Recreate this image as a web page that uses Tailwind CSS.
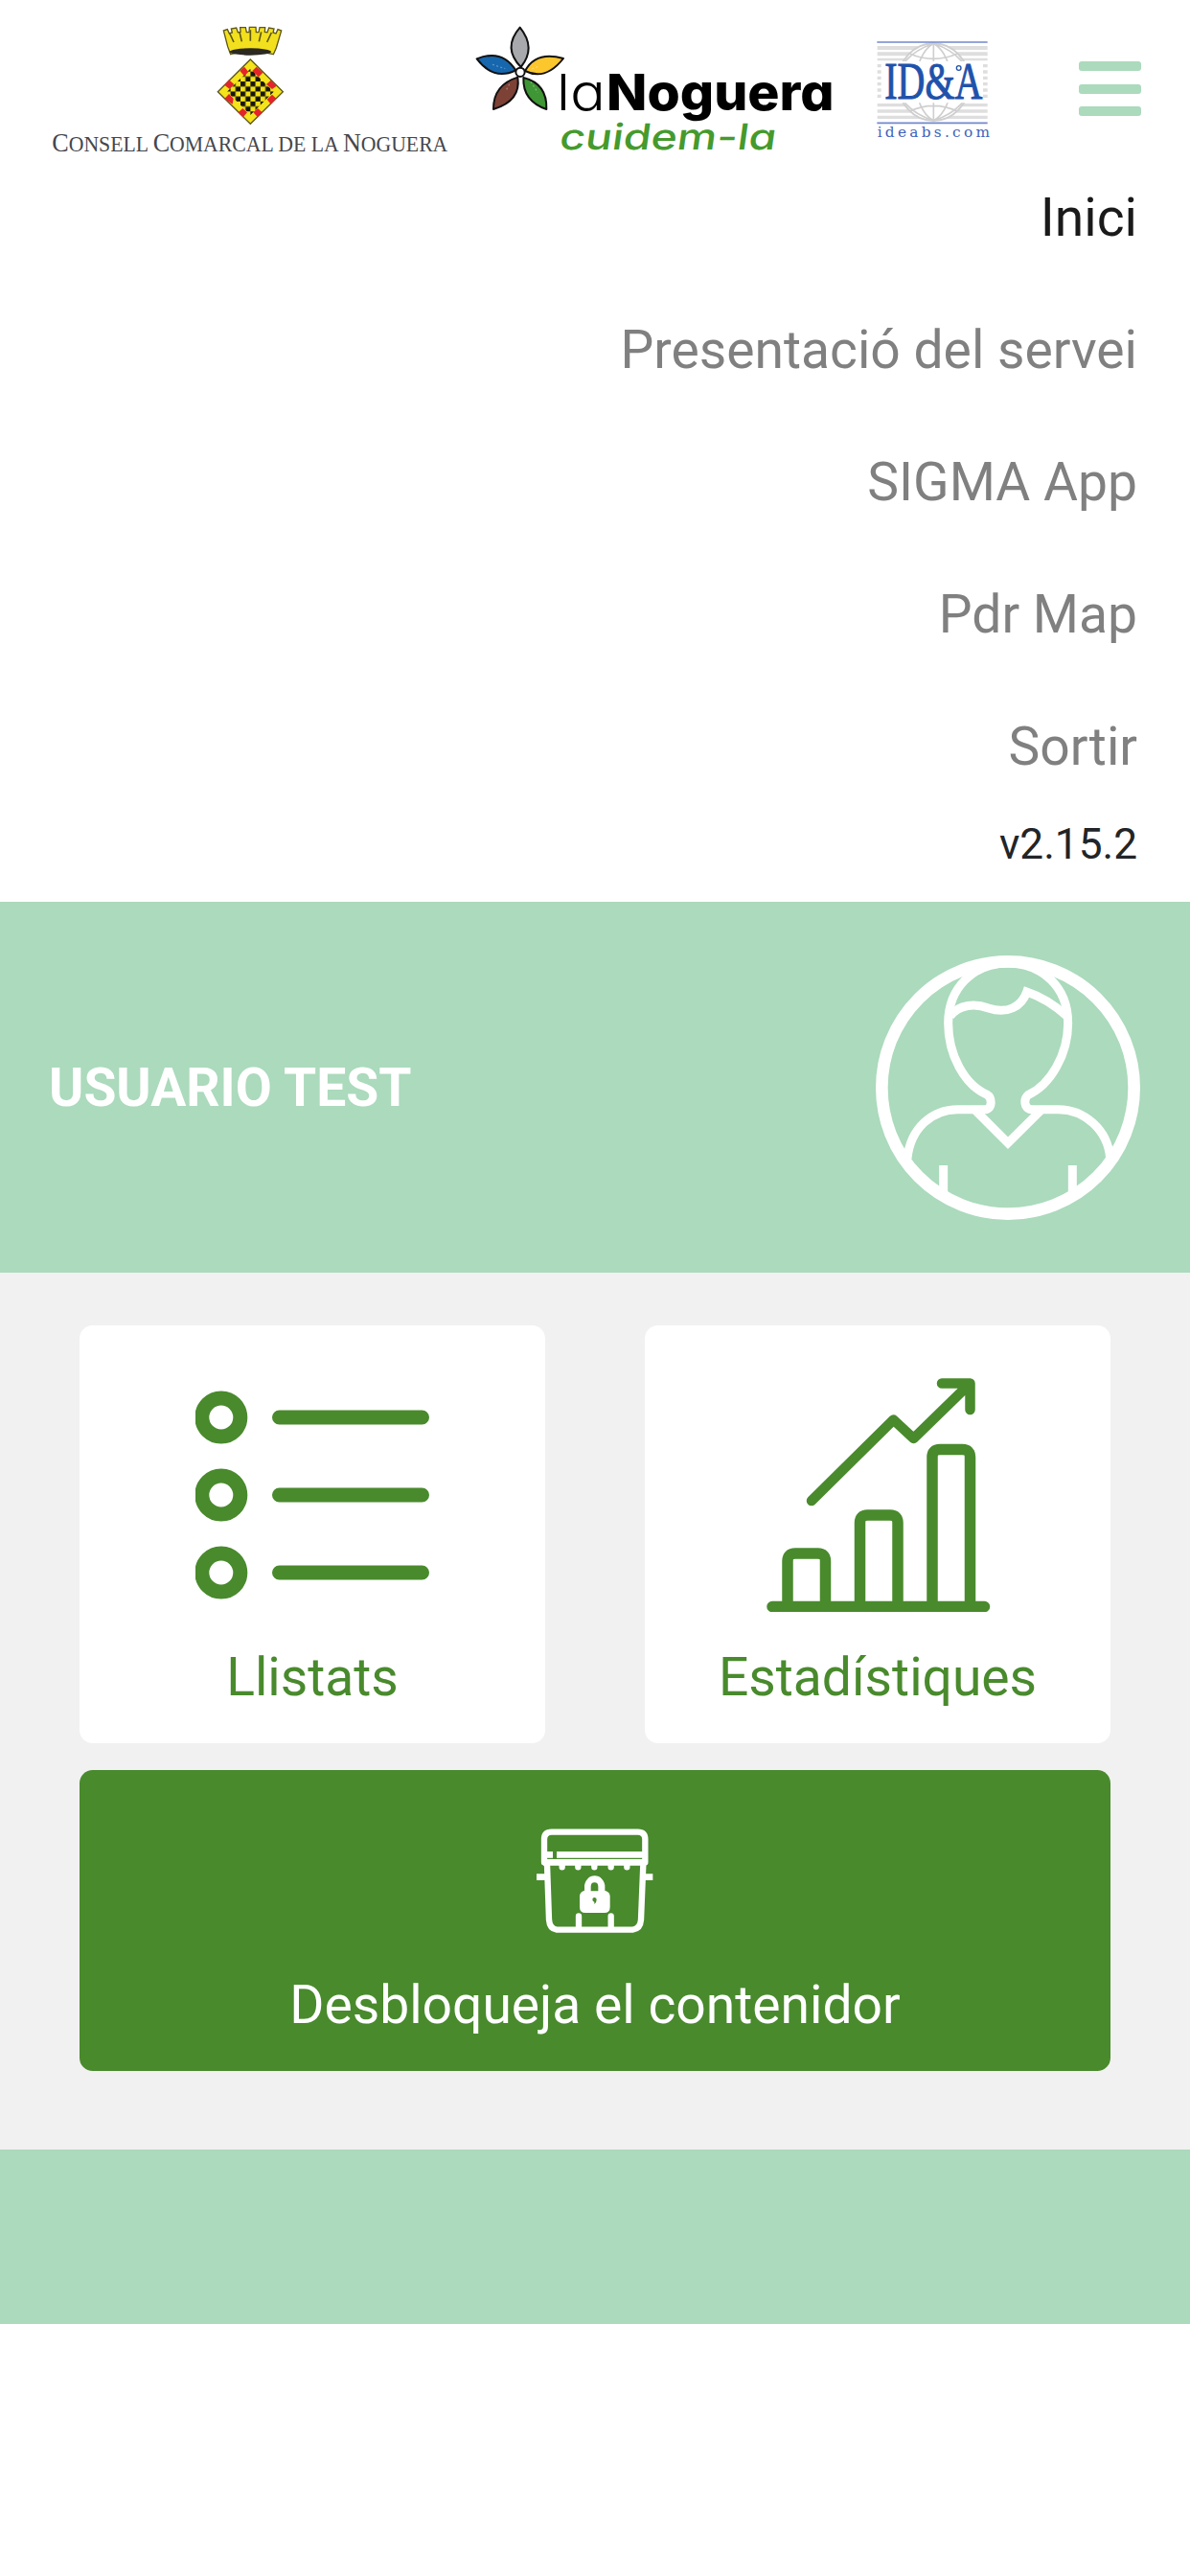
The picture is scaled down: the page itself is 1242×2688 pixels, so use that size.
<!DOCTYPE html>
<html lang="ca">
<head>
<meta charset="utf-8">
<title>La Noguera</title>
<script src="https://cdn.jsdelivr.net/npm/@tailwindcss/browser@4"></script>
</head>
<body class="min-h-screen bg-white font-['Roboto',sans-serif] text-[55.2px] leading-[82.8px] text-[#212529]">
<header class="flex h-[158px] pl-[40px]">
  <!-- Consell Comarcal -->
  <svg class="h-[158px] w-[440px] shrink-0 overflow-visible" viewBox="0 -30 1320 474">
    <defs>
      <pattern id="chess" width="31.2" height="31.2" patternUnits="userSpaceOnUse" x="633" y="194">
        <rect width="31.2" height="31.2" fill="#f3e21a"/><rect width="15.6" height="15.6" fill="#17150a"/><rect x="15.6" y="15.6" width="15.6" height="15.6" fill="#17150a"/>
      </pattern>
    </defs>
    <path d="M580 66l12-4 6 13 9-3-3-12 16-3 5 14 8-1-1-14h17l3 15h8l1-16h20l1 16h8l3-15h17l-1 14 8 1 5-14 16 3-3 12 9 3 6-13 11 4-16 54-9 20q-71-18-134 0l-9-24z" fill="#f2e01e" stroke="#5e5718" stroke-width="4"/>
    <path d="M598 72l14 30M630 70l7 30M664 64v34M698 70l-7 30M730 72l-14 30" fill="none" stroke="#5e5718" stroke-width="5"/>
    <ellipse cx="664" cy="132" rx="65" ry="11" fill="#2c2920"/>
    <path d="M664 156L766 257 664 358 562 257z" fill="#f5e31b" stroke="#5b5620" stroke-width="4"/>
    <path d="M664 185L737 257 664 330 591 257z" fill="url(#chess)"/>
    <path d="M631 192l14-13 13 16-13 13zM670 192l13-13 20 18-13 14zM583 236l14-16 16 14-14 15zM714 234l14-13 18 18-14 10zM583 279l14-15 14 15-3 17zM716 281l16-15 13 12-17 18zM626 322l14-13 14 13-13 15zM673 322l14-13 14 13-14 15z" fill="#e3242b"/>
    <text x="43" y="445" textLength="1239" lengthAdjust="spacingAndGlyphs" font-family="Liberation Serif" fill="#46464a" font-size="70"><tspan font-size="84">C</tspan>ONSELL <tspan font-size="84">C</tspan>OMARCAL DE LA <tspan font-size="84">N</tspan>OGUERA</text>
  </svg>
  <!-- laNoguera -->
  <svg class="h-[158px] w-[400px] shrink-0 overflow-visible" viewBox="0 -30 1200 474">
    <g stroke="#111" stroke-width="6" stroke-linejoin="round">
      <path d="M188 56Q240 120 191 180Q132 120 188 56z" fill="#a7a9ac"/>
      <path d="M53 154Q132 122 175 190Q106 224 53 154z" fill="#1667ad"/>
      <path d="M324 153Q268 224 204 192Q238 128 324 153z" fill="#fcc62d"/>
      <path d="M105 312Q104 236 181 212Q192 286 105 312z" fill="#7d4235"/>
      <path d="M271 312Q196 286 199 213Q274 232 271 312z" fill="#3f9634"/>
      <circle cx="189" cy="196" r="14" fill="#fff"/>
    </g>
    <path d="M102 172l40 13M226 186l24-10M146 250l12-22M222 226l22 34" stroke="#fff" stroke-opacity=".3" stroke-width="4" stroke-dasharray="6 7"/>
    <text class="[font-feature-settings:'cv11']" x="302" y="315" font-family="Inter" font-weight="300" font-size="158" textLength="154" lengthAdjust="spacingAndGlyphs" fill="#000">la</text>
    <text class="[font-feature-settings:'cv11']" x="459" y="315" font-family="Inter" font-weight="800" font-size="158" textLength="713" lengthAdjust="spacingAndGlyphs" fill="#000">Noguera</text>
    <text class="[font-feature-settings:'cv11']" transform="translate(308 438) skewX(-8)" font-family="Inter" font-weight="500" font-size="112" textLength="678" lengthAdjust="spacingAndGlyphs" fill="#459a2d">cuidem-la</text>
  </svg>
  <!-- ID&A -->
  <svg class="ml-[10px] h-[158px] w-[150px] shrink-0 overflow-visible" viewBox="0 -60 450 474">
    <g fill="#dedede"><path d="M77 84h345v12H77zM77 103h345v12H77zM77 122h345v8H77zM77 141h12v10H77zM77 160h12v10H77zM77 179h12v10H77zM77 198h12v10H77zM77 217h12v10H77zM77 236h12v10H77zM408 141h14v10h-14zM408 160h14v10h-14zM408 179h14v10h-14zM408 198h14v10h-14zM408 217h14v10h-14zM408 236h14v10h-14zM77 264h345v10H77zM77 283h345v10H77zM77 302h345v10H77z"/></g>
    <ellipse cx="253" cy="197" rx="112" ry="121" fill="#fff" stroke="#cfcfcf" stroke-width="6"/>
    <path d="M178 108q75 32 150 0M178 288q75-34 150 0M253 76v242M253 76C180 120 180 276 253 318M253 76C326 120 326 276 253 318M253 76C100 130 100 266 253 318M253 76C406 130 406 266 253 318" fill="none" stroke="#cfcfcf" stroke-width="5"/>
    <path d="M90 132h316v130H90z" fill="#fff"/>
    <path d="M76 72h346M76 325h346" stroke="#7388cd" stroke-width="5"/>
    <text x="100" y="249" font-family="Liberation Serif" font-size="162" textLength="306" lengthAdjust="spacingAndGlyphs" fill="#1f52ab" stroke="#1f52ab" stroke-width="3">ID&amp;A</text>
    <circle cx="332" cy="153" r="7" fill="none" stroke="#1f52ab" stroke-width="4"/>
    <text x="77" y="369" font-family="DejaVu Serif" font-size="46" textLength="352" fill="#4263bb">ideabs.com</text>
  </svg>
  <button class="ml-[86px] mt-[64px] flex h-[57px] w-[65px] flex-col justify-between" aria-label="Menú">
    <span class="h-[10px] w-full rounded-[3px] bg-[#abdabc]"></span><span class="h-[10px] w-full rounded-[3px] bg-[#abdabc]"></span><span class="h-[10px] w-full rounded-[3px] bg-[#abdabc]"></span>
  </button>
</header>
<nav class="flex h-[783px] flex-col items-end pr-[55px] text-[#808080]">
  <a class="py-[27.6px] text-[#1a1a1a]">Inici</a>
  <a class="py-[27.6px]">Presentació del servei</a>
  <a class="py-[27.6px]">SIGMA App</a>
  <a class="py-[27.6px]">Pdr Map</a>
  <a class="py-[27.6px]">Sortir</a>
  <span class="text-[44.2px] leading-[66px] text-[#212529]">v2.15.2</span>
</nav>
<section class="flex h-[387px] items-center justify-between bg-[#abdabc] pl-[51px] pr-[52px]">
  <h1 class="pt-[2px] font-bold text-white">USUARIO TEST</h1>
  <svg class="size-[276px]" viewBox="103 110 828 828" fill="none" stroke="#fff" stroke-width="27">
    <circle cx="517" cy="524" r="395" stroke-width="38"/>
    <path d="M202 745C212 650 280 592 360 592H448C468 590 468 556 452 546C380 515 330 420 330 322C330 210 410 134 517 134S705 210 705 322C705 420 650 515 580 547C565 560 568 592 590 592H675C755 592 830 655 837 745"/>
    <path d="M336 300C365 262 415 260 456 275C515 295 560 270 576 224Q640 245 702 300M415 595L517 697 620 595M315 767v90M719 767v90"/>
  </svg>
</section>
<main class="h-[915px] bg-[#f1f1f1] px-[83px] pt-[55px]">
  <div class="grid grid-cols-2 gap-[104px]">
    <a class="flex h-[436px] flex-col items-center rounded-[13.8px] bg-white pt-[55px] text-[#498a2d]">
      <svg class="h-[244px] w-[244px]" viewBox="205 1438 244 244" fill="none" stroke="#498a2d">
        <g stroke-width="15"><circle cx="231.8" cy="1479" r="20"/><circle cx="231.8" cy="1560" r="20"/><circle cx="231.8" cy="1641" r="20"/></g>
        <path stroke-width="15" stroke-linecap="round" d="M292.5 1479h149M292.5 1560h149M292.5 1641h149"/>
      </svg>
      <span class="mt-[27px]">Llistats</span>
    </a>
    <a class="flex h-[436px] flex-col items-center rounded-[13.8px] bg-white pt-[55px] text-[#498a2d]">
      <svg class="h-[244px] w-[244px]" viewBox="794 1438 244 244" fill="none" stroke="#498a2d" stroke-width="11.5" stroke-linejoin="round" stroke-linecap="round">
        <path d="M806 1676.500H1027.500M822 1676V1629q0-8 8-8h23.500q8 0 8 8V1676M897.500 1676V1589q0-8 8-8h23.500q8 0 8 8V1676M973 1676V1520.500q0-8 8-8h23.500q8 0 8 8V1676"/>
        <path stroke-width="10.500" d="M847 1566L932.500 1481.500L953.500 1501L1012 1444M983 1443.500H1012.500V1471"/>
      </svg>
      <span class="mt-[27px]">Estadístiques</span>
    </a>
  </div>
  <a class="mt-[28px] flex h-[314px] flex-col items-center rounded-[13.8px] bg-[#498a2d] pt-[55px] text-white">
    <svg class="h-[122px] w-[122px]" viewBox="121 126 366 366" fill="none" stroke="#fff" stroke-width="19" stroke-linecap="round" stroke-linejoin="round">
      <path d="M145 250V178q0-23 23-23H438q23 0 23 23V250M154 256L160 430q2 28 24 31H422q24-3 26-31L455 256"/>
      <path stroke-width="20" stroke-linecap="butt" d="M150 226H172M184 226H456M142 250H464M121 296H152M453 296H485"/>
      <path d="M201 254v11M251 254v11M302 254v11M354 254v11M404 254v11M253 418v40M354 418v40"/>
      <path stroke="none" fill="#fff" fill-rule="evenodd" d="M271 338V326a32 34 0 0 1 64 0v12q16 4 16 18v34q0 18-18 18H274q-18 0-18-18V356q0-14 15-18zM291 340H314V326a11.500 13 0 0 0-23 0zM296 366q0 7 6 8v7q7-4 7-14a6.500 6.500 0 0 0-13-1z"/>
    </svg>
    <span class="mt-[27px]">Desbloqueja el contenidor</span>
  </a>
</main>
<footer class="h-[182px] bg-[#abdabc]"></footer>
</body>
</html>
